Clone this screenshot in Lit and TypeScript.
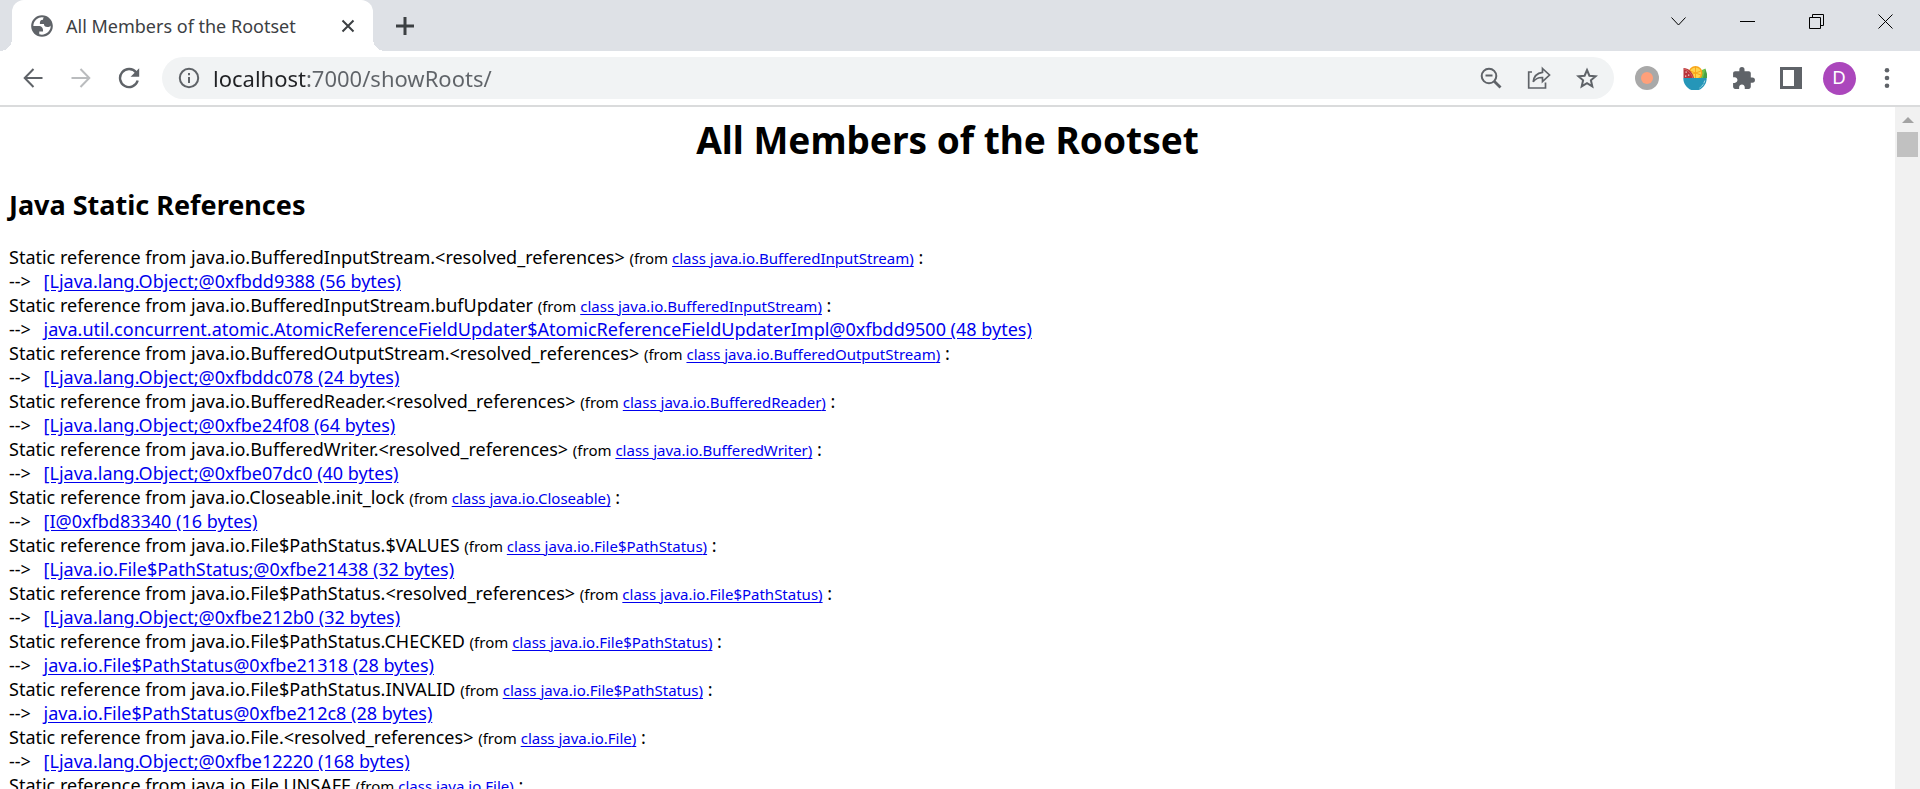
import { LitElement, html, css, svg } from "lit";
import { customElement } from "lit/decorators.js";

interface RootRef {
  field: string;
  owner: string;
  target: string;
}

const ROOTS: RootRef[] = [
  { field: "java.io.BufferedInputStream.<resolved_references>", owner: "java.io.BufferedInputStream", target: "[Ljava.lang.Object;@0xfbdd9388 (56 bytes)" },
  { field: "java.io.BufferedInputStream.bufUpdater", owner: "java.io.BufferedInputStream", target: "java.util.concurrent.atomic.AtomicReferenceFieldUpdater$AtomicReferenceFieldUpdaterImpl@0xfbdd9500 (48 bytes)" },
  { field: "java.io.BufferedOutputStream.<resolved_references>", owner: "java.io.BufferedOutputStream", target: "[Ljava.lang.Object;@0xfbddc078 (24 bytes)" },
  { field: "java.io.BufferedReader.<resolved_references>", owner: "java.io.BufferedReader", target: "[Ljava.lang.Object;@0xfbe24f08 (64 bytes)" },
  { field: "java.io.BufferedWriter.<resolved_references>", owner: "java.io.BufferedWriter", target: "[Ljava.lang.Object;@0xfbe07dc0 (40 bytes)" },
  { field: "java.io.Closeable.init_lock", owner: "java.io.Closeable", target: "[I@0xfbd83340 (16 bytes)" },
  { field: "java.io.File$PathStatus.$VALUES", owner: "java.io.File$PathStatus", target: "[Ljava.io.File$PathStatus;@0xfbe21438 (32 bytes)" },
  { field: "java.io.File$PathStatus.<resolved_references>", owner: "java.io.File$PathStatus", target: "[Ljava.lang.Object;@0xfbe212b0 (32 bytes)" },
  { field: "java.io.File$PathStatus.CHECKED", owner: "java.io.File$PathStatus", target: "java.io.File$PathStatus@0xfbe21318 (28 bytes)" },
  { field: "java.io.File$PathStatus.INVALID", owner: "java.io.File$PathStatus", target: "java.io.File$PathStatus@0xfbe212c8 (28 bytes)" },
  { field: "java.io.File.<resolved_references>", owner: "java.io.File", target: "[Ljava.lang.Object;@0xfbe12220 (168 bytes)" },
  { field: "java.io.File.UNSAFE", owner: "java.io.File", target: "" },
];

const line = (size: number, box: string, body: unknown, width = 2) =>
  html`<svg width=${size} height=${size} viewBox=${box} fill="none" stroke="currentColor" stroke-width=${width} aria-hidden="true">${body}</svg>`;
const solid = (size: number, box: string, body: unknown) =>
  html`<svg width=${size} height=${size} viewBox=${box} fill="currentColor" aria-hidden="true">${body}</svg>`;

const icons = {
  globe: solid(26, "0 0 24 24", svg`<path fill-rule="evenodd" d="M12 2C6.480 2 2 6.480 2 12s4.480 10 10 10 10-4.480 10-10S17.520 2 12 2zM4 12h4.400c3.407.022 4.922 1.730 4.543 5.127H9.488v2.470a8.004 8.004 0 0 0 10.498-8.083C19.327 12.504 18.332 13 17 13c-2.137 0-3.206-.916-3.206-2.750h-3.748c-.274-2.728.683-4.092 2.870-4.092 0-.975.327-1.597.811-1.970A8.004 8.004 0 0 0 4 12z"/>`),
  close: line(14, "0 0 14 14", svg`<path d="M1.500 1.500l11 11M12.500 1.500l-11 11"/>`),
  plus: line(18, "0 0 18 18", svg`<path d="M9 0v18M0 9h18"/>`, 3),
  back: line(20, "0 0 20 20", svg`<path d="M19.500 10H2M10.500 1L1.700 10l8.800 9"/>`),
  forward: line(20, "0 0 20 20", svg`<path d="M.5 10H18M9.500 1l8.800 9-8.800 9"/>`),
  reload: line(22, "0 0 22 22", svg`<path stroke-width="2.400" d="M18.200 5.600A9 9 0 1 0 19.700 13.500"/><path fill="currentColor" stroke="none" d="M21.200 1.200v8.600h-8.600z"/>`),
  info: line(22, "0 0 22 22", svg`<circle cx="11" cy="11" r="9.200"/><path d="M11 10v6M11 6v2.200"/>`),
  zoomOut: line(22, "0 0 22 22", svg`<circle cx="9" cy="9" r="7.300"/><path d="M14.200 14.200l6.300 6.300" stroke-width="2.800"/><path d="M5.500 8.500h7"/>`),
  share: line(24, "0 0 24 24", svg`<path d="M5 6H1.700v16h16.800v-5.500" stroke-width="1.700"/><path d="M15.500 2.500l7 6.500-7 6.500v-4c-4.300-.2-7 1-9.300 4.300.6-5.300 3.800-8.800 9.300-9.500z" stroke-width="1.700"/>`),
  star: line(22, "0 0 22 22", svg`<path d="M11 3l2.400 5.700 6.200.5-4.700 4.100 1.400 6.100L11 16.200l-5.300 3.200 1.400-6.100-4.700-4.100 6.200-.5z"/>`),
  dot: html`<svg width="24" height="24" viewBox="0 0 24 24" aria-hidden="true"><circle cx="12" cy="12" r="12" fill="#a9a9a9"/><circle cx="12" cy="12" r="6" fill="#ffa07a"/></svg>`,
  bowl: html`<svg width="24" height="24" viewBox="0 0 24 24" aria-hidden="true">
    <path fill="#6cc24a" d="M17 12l2-8 3.500-1.500L24 12z"/><path fill="#47a047" d="M20 12l2.500-9L24 8v4z"/>
    <circle cx="12.500" cy="7" r="7" fill="#f9a61a"/><circle cx="12.500" cy="7" r="5.600" fill="#ffd34d"/>
    <path stroke="#f9a61a" stroke-width="1" d="M12.500 1v12M7 5l11 4M7 9l11-4"/>
    <path fill="#b8333a" d="M.5 2c5 0 9 4 10.500 10H.5z"/><path stroke="#d9665f" d="M1 3c4 1 7.500 4.500 8.800 9" fill="none"/>
    <path fill="#f6dcd2" d="M2.500 5.500h1.300v1.300H2.500zM5 8.500h1.300v1.300H5zM2 9.500h1.300v1.300H2z"/>
    <path fill="#2596b8" d="M.3 12h23.400c0 5.500-3.200 10-8 12H8.300C3.500 22 .3 17.500.3 12z"/>
    <path stroke="#a8d9e6" stroke-dasharray="3 1" fill="none" d="M21.800 14.500c-.7 3.300-2.600 6-5.300 7.500"/></svg>`,
  puzzle: solid(25, "0 0 24 24", svg`<path d="M20.500 11H19V7c0-1.100-.9-2-2-2h-4V3.500a2.500 2.500 0 0 0-5 0V5H4c-1.100 0-1.990.9-1.990 2v3.800H3.500c1.490 0 2.700 1.210 2.700 2.700s-1.210 2.700-2.700 2.700H2V20c0 1.100.9 2 2 2h3.800v-1.500c0-1.490 1.210-2.700 2.700-2.700s2.700 1.210 2.700 2.700V22H17c1.100 0 2-.9 2-2v-4h1.500a2.500 2.500 0 0 0 0-5z"/>`),
  panel: solid(22, "0 0 22 22", svg`<path fill-rule="evenodd" d="M0 0h22v22H0zM3 3v16h11V3z"/>`),
  menu: solid(22, "0 0 22 22", svg`<circle cx="11" cy="3.300" r="2.300"/><circle cx="11" cy="11" r="2.300"/><circle cx="11" cy="18.700" r="2.300"/>`),
  chevron: line(15, "0 0 15 15", svg`<path d="M.5 3.500l7 7.500 7-7.500"/>`, 1),
  minimize: line(15, "0 0 15 15", svg`<path d="M0 7.500h15"/>`, 1),
  restore: line(15, "0 0 15 15", svg`<path d="M.5 3.500h11v11H.5zM3.500 3.500v-3h11v11h-3"/>`, 1),
  closeWindow: line(15, "0 0 15 15", svg`<path d="M.5.5l14 14M14.500.5l-14 14"/>`, 1),
};

@customElement("browser-tabs")
class BrowserTabs extends LitElement {
  static styles = css`
    :host { display: flex; justify-content: space-between; height: 51px; background: #dee1e6; color: #3c4043; }
    svg { display: block; }
    button { padding: 0; border: 0; background: none; color: inherit; display: grid; place-items: center; }
    .tabs { display: flex; }
    .flare { width: 12px; height: 12px; align-self: flex-end; }
    .left { background: radial-gradient(circle at 0 0, #dee1e6 12px, #fff 12px); }
    .right { background: radial-gradient(circle at 100% 0, #dee1e6 12px, #fff 12px); }
    .tab { width: 361px; box-sizing: border-box; display: flex; align-items: center; padding: 0 13px 0 17px; gap: 11px; border-radius: 12px 12px 0 0; background: #fff; }
    .globe { color: #5f6368; }
    .title { flex: 1; font-size: 18px; line-height: 24px; white-space: nowrap; }
    .close { width: 24px; height: 24px; color: #3c4043; }
    .new { width: 40px; }
    .window { display: flex; height: 43px; color: #000; }
    .window button { width: 69px; }
  `;
  render() {
    return html`
      <div class="tabs">
        <span class="flare left"></span>
        <div class="tab">
          <span class="globe">${icons.globe}</span>
          <span class="title">All Members of the Rootset</span>
          <button class="close" aria-label="Close tab">${icons.close}</button>
        </div>
        <span class="flare right"></span>
        <button class="new" aria-label="New tab">${icons.plus}</button>
      </div>
      <div class="window">
        <button aria-label="Search tabs">${icons.chevron}</button>
        <button aria-label="Minimize">${icons.minimize}</button>
        <button aria-label="Restore">${icons.restore}</button>
        <button aria-label="Close">${icons.closeWindow}</button>
      </div>
    `;
  }
}

@customElement("browser-toolbar")
class BrowserToolbar extends LitElement {
  static styles = css`
    :host { display: flex; align-items: center; gap: 9px; padding: 6px 9px; border-bottom: 2px solid #dadbdc; background: #fff; color: #5f6368; }
    svg { display: block; }
    button { width: 48px; height: 42px; padding: 0; border: 0; background: none; color: inherit; display: grid; place-items: center; }
    button:disabled { color: #babcbe; }
    .group { display: flex; }
    .address { flex: 1; min-width: 0; height: 42px; display: flex; align-items: center; padding: 0 3px; border-radius: 21px; background: #f1f3f4; }
    .url {
      flex: 1; min-width: 0; height: 30px; padding: 0; border: 0; outline: 0; font: inherit; font-size: 22px;
      color: #5f6368; -webkit-text-fill-color: transparent;
      background: linear-gradient(90deg, #202124 94px, #5f6368 94px); -webkit-background-clip: text; background-clip: text;
    }
    .avatar { width: 33px; height: 33px; display: grid; place-items: center; border-radius: 50%; background: #ab47bc; color: #fff; font-size: 18px; line-height: 24px; }
  `;
  render() {
    return html`
      <nav class="group">
        <button aria-label="Back">${icons.back}</button>
        <button aria-label="Forward" disabled>${icons.forward}</button>
        <button aria-label="Reload">${icons.reload}</button>
      </nav>
      <div class="address">
        <button aria-label="Site information">${icons.info}</button>
        <input class="url" type="text" aria-label="Address" value="localhost:7000/showRoots/" spellcheck="false" />
        <button aria-label="Zoom">${icons.zoomOut}</button>
        <button aria-label="Share">${icons.share}</button>
        <button aria-label="Bookmark">${icons.star}</button>
      </div>
      <div class="group">
        <button aria-label="Recorder">${icons.dot}</button>
        <button aria-label="Salad">${icons.bowl}</button>
        <button aria-label="Extensions">${icons.puzzle}</button>
        <button aria-label="Side panel">${icons.panel}</button>
        <button aria-label="Profile"><span class="avatar">D</span></button>
        <button aria-label="Menu">${icons.menu}</button>
      </div>
    `;
  }
}

@customElement("roots-page")
class RootsPage extends LitElement {
  static styles = css`
    :host { display: block; padding: 8px 9px; color: #000; font-size: 18px; line-height: 24px; }
    h1 { margin: 0 0 22px; font-size: 37px; line-height: 50px; text-align: center; }
    h2 { margin: 0 0 22px; font-size: 27px; line-height: 36px; }
    p { margin: 0; white-space: nowrap; }
    small { font-size: 15px; line-height: 20px; }
    a { color: #0000ee; text-underline-offset: 2px; }
    .arrow { margin-right: 8px; }
  `;
  render() {
    return html`
      <h1>All Members of the Rootset</h1>
      <h2>Java Static References</h2>
      ${ROOTS.map(
        (r) => html`
          <p>Static reference from ${r.field} <small>(from <a href="#${r.owner}">class ${r.owner})</a></small> :</p>
          ${r.target ? html`<p><span class="arrow">--&gt;</span> <a href="#${r.target}">${r.target}</a></p>` : ""}
        `,
      )}
    `;
  }
}

@customElement("app-root")
class AppRoot extends LitElement {
  static styles = css`
    :host { display: flex; flex-direction: column; height: 100vh; overflow: hidden; background: #fff; font-family: "Noto Sans", "Open Sans", sans-serif; }
    .view { flex: 1; min-height: 0; display: flex; }
    .page { flex: 1; min-width: 0; overflow: hidden; }
    .scrollbar { width: 25px; display: flex; flex-direction: column; align-items: center; background: #f1f1f1; }
    .up { width: 25px; height: 25px; padding: 0; border: 0; background: none; display: grid; place-items: center; }
    .thumb { width: 21px; height: 25px; background: #c1c1c1; }
  `;
  render() {
    return html`
      <browser-tabs></browser-tabs>
      <browser-toolbar></browser-toolbar>
      <div class="view">
        <main class="page"><roots-page></roots-page></main>
        <div class="scrollbar">
          <button class="up" aria-label="Scroll up"><svg width="12" height="6" viewBox="0 0 12 6"><path fill="#a3a3a3" d="M6 0l6 6H0z" /></svg></button>
          <div class="thumb"></div>
        </div>
      </div>
    `;
  }
}
